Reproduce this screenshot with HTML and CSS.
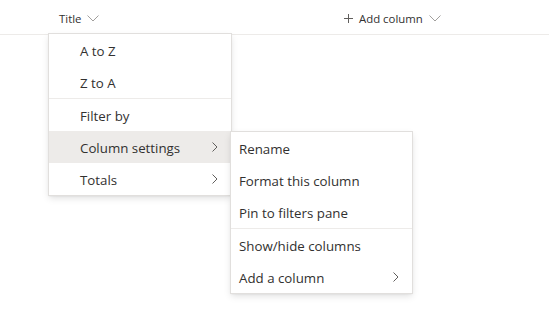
FILE: index.html
```html
<!DOCTYPE html>
<html>
<head>
<meta charset="utf-8">
<link rel="stylesheet" href="styles.css">
</head>
<body>
<div class="header">
  <div class="cell title-cell">
    <span class="hdr-text">Title</span>
    <svg class="chev-down" width="12" height="7" viewBox="0 0 12 7"><path d="M0.5 0.5 L6 6 L11.5 0.5" fill="none" stroke="#a19f9d" stroke-width="1"/></svg>
  </div>
  <div class="cell add-cell">
    <svg class="plus" width="9" height="9" viewBox="0 0 9 9"><path d="M4.5 0 V9 M0 4.5 H9" stroke="#605e5c" stroke-width="1"/></svg>
    <span class="hdr-text">Add column</span>
    <svg class="chev-down" width="12" height="7" viewBox="0 0 12 7"><path d="M0.5 0.5 L6 6 L11.5 0.5" fill="none" stroke="#a19f9d" stroke-width="1"/></svg>
  </div>
</div>

<div class="menu main-menu">
  <div class="item"><span class="label">A to Z</span></div>
  <div class="item"><span class="label">Z to A</span></div>
  <div class="divider"></div>
  <div class="item"><span class="label">Filter by</span></div>
  <div class="item active"><span class="label">Column settings</span>
    <svg class="chev-right" width="6" height="10" viewBox="0 0 6 10"><path d="M0.5 0.5 L5 5 L0.5 9.5" fill="none" stroke="#605e5c" stroke-width="1"/></svg>
  </div>
  <div class="item"><span class="label">Totals</span>
    <svg class="chev-right" width="6" height="10" viewBox="0 0 6 10"><path d="M0.5 0.5 L5 5 L0.5 9.5" fill="none" stroke="#605e5c" stroke-width="1"/></svg>
  </div>
</div>

<div class="menu sub-menu">
  <div class="item"><span class="label">Rename</span></div>
  <div class="item"><span class="label">Format this column</span></div>
  <div class="item"><span class="label">Pin to filters pane</span></div>
  <div class="divider"></div>
  <div class="item"><span class="label">Show/hide columns</span></div>
  <div class="item"><span class="label">Add a column</span>
    <svg class="chev-right" width="6" height="10" viewBox="0 0 6 10"><path d="M0.5 0.5 L5 5 L0.5 9.5" fill="none" stroke="#605e5c" stroke-width="1"/></svg>
  </div>
</div>
</body>
</html>
```

FILE: styles.css
```css
html, body {
  margin: 0;
  padding: 0;
  background: #ffffff;
  font-family: "Open Sans", "Noto Sans", sans-serif;
  color: #323130;
}

.header {
  display: flex;
  box-sizing: border-box;
  height: 35px;
  border-bottom: 1px solid #edebe9;
  padding-left: 59px;
  padding-top: 2px;
  align-items: center;
}

.cell {
  display: flex;
  align-items: center;
}

.title-cell {
  width: 285px;
  gap: 6px;
}

.add-cell {
  gap: 6px;
}

.hdr-text {
  font-size: 11.4px;
  color: #323130;
}

.chev-down {
  display: block;
}

.plus {
  display: block;
}

.menu {
  position: absolute;
  background: #ffffff;
  box-shadow: 0 0 0 1px #e1dfdd, 0 3.2px 7.2px rgba(0,0,0,0.13), 0 0.6px 1.8px rgba(0,0,0,0.1);
  font-size: 13.3px;
}

.main-menu {
  left: 49px;
  top: 34px;
  width: 182px;
}

.sub-menu {
  left: 231px;
  top: 132px;
  width: 181px;
}

.item {
  box-sizing: border-box;
  height: 32px;
  display: flex;
  align-items: center;
  justify-content: space-between;
  padding-right: 13px;
  padding-top: 2px;
}

.main-menu .item {
  padding-left: 31px;
}

.sub-menu .item {
  padding-left: 8px;
}

.item.active {
  background: #edebe9;
}

.divider {
  height: 1px;
  background: #edebe9;
}

.chev-right {
  display: block;
  margin-top: -2px;
}
```
